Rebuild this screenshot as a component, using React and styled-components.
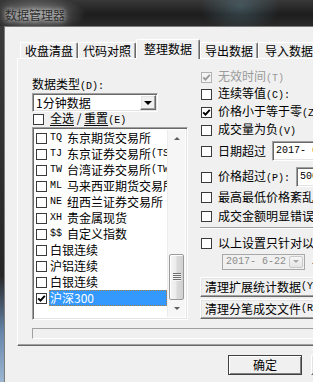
import React from "react"
import styled, { createGlobalStyle, css } from "styled-components"

const items = [
  { code: "TQ", name: "东京期货交易所" },
  { code: "TJ", name: "东京证券交易所", tail: "(TSE)" },
  { code: "TW", name: "台湾证券交易所", tail: "(TWSE)" },
  { code: "ML", name: "马来西亚期货交易所" },
  { code: "NE", name: "纽西兰证券交易所" },
  { code: "XH", name: "贵金属现货" },
  { code: "$$", name: "自定义指数" },
  { name: "白银连续" },
  { name: "沪铝连续" },
  { name: "白银连续" },
  { name: "沪深300", checked: true, selected: true },
]

const tabs = [
  { label: "收盘清盘", w: 58 },
  { label: "代码对照", w: 58 },
  { label: "整理数据", w: 64, active: true },
  { label: "导出数据", w: 58 },
  { label: "导入数据", w: 62 },
]

const Checkbox = ({ checked, disabled }) => (
  <Box $disabled={disabled}>
    {checked && (
      <svg width="9" height="9" viewBox="0 0 9 9">
        <path d="M1.2 4.3 L3.5 6.7 L7.8 1.8" fill="none" stroke="currentColor" strokeWidth="1.9" />
      </svg>
    )}
  </Box>
)

const App = () => {
  return (
    <>
      <GlobalStyle />
      <Screen>
        <TitleBar>
          <Title>数据管理器</Title>
        </TitleBar>
        <Body>
          <FrameEdge />
          <Client>
            <TabStrip>
              {tabs.map(t => (
                <Tab key={t.label} $w={t.w} $active={t.active}>
                  {t.label}
                </Tab>
              ))}
            </TabStrip>
            <Panel>
              <LeftColumn>
                <FieldLabel>
                  数据类型<Hint>(D):</Hint>
                </FieldLabel>
                <Combo>
                  <span>1分钟数据</span>
                  <DropButton>
                    <Arrow />
                  </DropButton>
                </Combo>
                <SelectAll>
                  <Checkbox />
                  <span>
                    <u>全选</u> / <u>重置</u>
                    <Hint>(E)</Hint>
                  </span>
                </SelectAll>
                <ListBox>
                  <Rows>
                    {items.map((it, i) => (
                      <ListRow key={i}>
                        <Checkbox checked={it.checked} />
                        <ItemText $selected={it.selected}>
                          {it.code && <Code>{it.code}</Code>}
                          {it.name}
                          {it.tail && <Hint>{it.tail}</Hint>}
                        </ItemText>
                      </ListRow>
                    ))}
                  </Rows>
                  <ScrollBar>
                    <ScrollArrow>
                      <SmallArrow $up />
                    </ScrollArrow>
                    <Track>
                      <Thumb>
                        <Grip />
                      </Thumb>
                    </Track>
                    <ScrollArrow>
                      <SmallArrow />
                    </ScrollArrow>
                  </ScrollBar>
                </ListBox>
              </LeftColumn>

              <RightColumn>
                <OptRow $h={17} $disabled>
                  <Checkbox checked disabled />
                  <span>
                    无效时间<Hint>(T)</Hint>
                  </span>
                </OptRow>
                <OptRow $h={17}>
                  <Checkbox />
                  <span>
                    连续等值<Hint>(C):</Hint>
                  </span>
                </OptRow>
                <OptRow $h={18}>
                  <Checkbox checked />
                  <span>
                    价格小于等于零<Hint>(Z)</Hint>
                  </span>
                </OptRow>
                <OptRow $h={19}>
                  <Checkbox />
                  <span>
                    成交量为负<Hint>(V)</Hint>
                  </span>
                </OptRow>
                <OptRow $h={22}>
                  <Checkbox />
                  <span>日期超过</span>
                  <TextField $w={80}>2017- 6-22</TextField>
                </OptRow>
                <OptRow $h={22} $mt={4}>
                  <Checkbox />
                  <span>
                    价格超过<Hint>(P):</Hint>
                  </span>
                  <TextField $w={60}>500</TextField>
                </OptRow>
                <OptRow $h={18}>
                  <Checkbox />
                  <span>最高最低价格紊乱</span>
                </OptRow>
                <OptRow $h={20}>
                  <Checkbox />
                  <span>成交金额明显错误</span>
                </OptRow>
                <Separator />
                <OptRow $h={16} $mt={6}>
                  <Checkbox />
                  <span>以上设置只针对以下日期</span>
                </OptRow>
                <DateRow>
                  <DatePicker>
                    <span>2017- 6-22</span>
                    <PickerButton>
                      <SmallArrow />
                    </PickerButton>
                  </DatePicker>
                  <span>-</span>
                </DateRow>
                <ActionButton $mt={7}>
                  清理扩展统计数据<Hint>(Y)</Hint>
                </ActionButton>
                <ActionButton $mt={2}>
                  清理分笔成交文件<Hint>(R)</Hint>
                </ActionButton>
              </RightColumn>

              <Progress />
            </Panel>
            <Footer>
              <DialogButton $default>确定</DialogButton>
              <DialogButton>取消</DialogButton>
            </Footer>
          </Client>
        </Body>
      </Screen>
    </>
  )
}

const GlobalStyle = createGlobalStyle`
  html, body {
    margin: 0;
    padding: 0;
    overflow: hidden;
    background: #222;
  }
  body {
    font-family: "Noto Sans CJK SC", "Noto Sans", sans-serif;
    font-size: 12px;
    color: #000;
  }
`

const sunken = css`
  border: 1px solid;
  border-color: #a0a0a0 #ffffff #ffffff #a0a0a0;
  box-shadow: inset 1px 1px 0 #696969, inset -1px -1px 0 #e3e3e3;
`

const raised = css`
  border: 1px solid;
  border-color: #ffffff #696969 #696969 #ffffff;
  box-shadow: inset -1px -1px 0 #a0a0a0, inset 1px 1px 0 #e3e3e3;
  background: #f0f0f0;
`

const Screen = styled.div`
  width: 313px;
  height: 382px;
  overflow: hidden;
  display: flex;
  flex-direction: column;
`

const TitleBar = styled.div`
  height: 26px;
  flex: none;
  display: flex;
  align-items: center;
  padding: 2px 0 0 5px;
  box-sizing: border-box;
  background:
    radial-gradient(ellipse 50px 18px at 36px 14px, rgba(200, 200, 200, 0.55), rgba(200, 200, 200, 0) 100%),
    radial-gradient(ellipse 40px 26px at 240px 6px, rgba(110, 160, 180, 0.35), rgba(110, 160, 180, 0) 100%),
    linear-gradient(to bottom, #383838, #1d1d1d 55%, #2a2a2a);
`

const Title = styled.span`
  font-size: 12px;
  color: #2e2e2e;
  text-shadow: 0 0 4px rgba(255, 255, 255, 0.8), 0 0 9px rgba(255, 255, 255, 0.5);
`

const Body = styled.div`
  flex: 1;
  display: flex;
  min-height: 0;
`

const FrameEdge = styled.div`
  width: 4px;
  flex: none;
  background: linear-gradient(to bottom, #3a3a3a 0%, #262626 70%, #6686aa 86%, #9cb6d2 100%);
`

const Client = styled.div`
  flex: none;
  width: 420px;
  background: #f0f0f0;
  border-left: 1px solid #7c7c7c;
  border-top: 1px solid #7c7c7c;
  padding: 12px 0 0 12px;
  box-sizing: border-box;
`

const TabStrip = styled.div`
  display: flex;
  align-items: flex-end;
  height: 19px;
  padding-left: 3px;
`

const Tab = styled.div`
  box-sizing: border-box;
  width: ${p => p.$w}px;
  height: ${p => (p.$active ? 20 : 16)}px;
  margin-bottom: ${p => (p.$active ? -1 : 0)}px;
  padding-bottom: ${p => (p.$active ? 2 : 0)}px;
  border: 1px solid #fff;
  border-bottom: none;
  border-right-color: #696969;
  border-radius: 2px 2px 0 0;
  box-shadow: inset -1px 0 0 #a0a0a0;
  background: #f0f0f0;
  display: flex;
  align-items: center;
  justify-content: center;
  position: relative;
  z-index: ${p => (p.$active ? 1 : 0)};
  line-height: 14px;
`

const Panel = styled.div`
  width: 400px;
  height: 288px;
  box-sizing: border-box;
  border: 1px solid;
  border-color: #fff #696969 #696969 #fff;
  box-shadow: inset -1px -1px 0 #a0a0a0;
  padding: 10px 0 0 14px;
  display: grid;
  grid-template-columns: 156px 220px;
  grid-template-rows: auto auto;
  column-gap: 12px;
  align-items: start;
`

const Hint = styled.span`
  font-family: "Liberation Mono", "DejaVu Sans Mono", monospace;
  font-size: 10px;
`

const LeftColumn = styled.div`
  margin-top: 8px;
  display: flex;
  flex-direction: column;
`

const FieldLabel = styled.div`
  line-height: 14px;
  height: 14px;
  margin-bottom: 2px;
`

const Combo = styled.div`
  ${sunken};
  box-sizing: border-box;
  width: 126px;
  height: 19px;
  background: #fff;
  display: flex;
  align-items: center;
  padding: 0 1px 0 3px;
  line-height: 14px;
`

const DropButton = styled.span`
  ${raised};
  box-sizing: border-box;
  margin-left: auto;
  width: 16px;
  height: 15px;
  display: flex;
  align-items: center;
  justify-content: center;
`

const Arrow = styled.span`
  width: 0;
  height: 0;
  border-left: 4px solid transparent;
  border-right: 4px solid transparent;
  border-top: 4px solid #000;
`

const SmallArrow = styled.span`
  width: 0;
  height: 0;
  border-left: 3.5px solid transparent;
  border-right: 3.5px solid transparent;
  ${p => (p.$up ? "border-bottom" : "border-top")}: 3px solid #5c5c5c;
`

const SelectAll = styled.div`
  height: 14px;
  display: flex;
  align-items: center;
  gap: 6px;
  padding-left: 1px;
  line-height: 14px;
  white-space: nowrap;
  u {
    text-underline-offset: 2px;
  }
`

const Box = styled.span`
  box-sizing: border-box;
  flex: none;
  width: 11px;
  height: 11px;
  border: 1px solid ${p => (p.$disabled ? "#b1b1b1" : "#3a3a3a")};
  background: ${p => (p.$disabled ? "#f4f4f4" : "#fff")};
  color: ${p => (p.$disabled ? "#9a9a9a" : "#000")};
  display: inline-flex;
  align-items: center;
  justify-content: center;
`

const ListBox = styled.div`
  ${sunken};
  box-sizing: border-box;
  margin-top: 1px;
  width: 156px;
  height: 193px;
  background: #fff;
  display: flex;
  padding: 2px;
`

const Rows = styled.div`
  flex: 1;
  min-width: 0;
  overflow: hidden;
`

const ListRow = styled.div`
  height: 16px;
  display: flex;
  align-items: stretch;
  padding-left: 1px;
  white-space: nowrap;
  > span:first-child {
    align-self: center;
    margin-right: 2px;
  }
`

const ItemText = styled.span`
  flex: 1;
  min-width: 0;
  overflow: hidden;
  display: flex;
  align-items: center;
  padding-left: 1px;
  line-height: 14px;
  background: ${p => (p.$selected ? "#3399ff" : "transparent")};
  color: ${p => (p.$selected ? "#fff" : "#000")};
  outline: ${p => (p.$selected ? "1px dotted #b07a40" : "none")};
  outline-offset: -1px;
`

const Code = styled(Hint)`
  width: 12px;
  margin-right: 5px;
  flex: none;
`

const ScrollBar = styled.div`
  width: 17px;
  flex: none;
  display: flex;
  flex-direction: column;
  background: #f6f6f6;
  border-left: 1px solid #ececec;
`

const ScrollArrow = styled.div`
  height: 17px;
  flex: none;
  display: flex;
  align-items: center;
  justify-content: center;
`

const Track = styled.div`
  flex: 1;
  display: flex;
  flex-direction: column;
  justify-content: flex-end;
  padding: 0 1px;
`

const Thumb = styled.div`
  height: 46px;
  box-sizing: border-box;
  border: 1px solid #9a9a9a;
  border-radius: 2px;
  background: linear-gradient(to right, #f6f6f6, #ebebeb 45%, #dadada 55%, #d2d2d2);
  box-shadow: inset 1px 1px 0 #fff;
  display: flex;
  align-items: center;
  justify-content: center;
`

const Grip = styled.span`
  width: 8px;
  height: 8px;
  background: repeating-linear-gradient(to bottom, #6e6e6e 0 1px, #f4f4f4 1px 2px);
`

const RightColumn = styled.div`
  display: flex;
  flex-direction: column;
  align-items: flex-start;
`

const OptRow = styled.div`
  height: ${p => p.$h}px;
  margin-top: ${p => p.$mt || 0}px;
  display: flex;
  align-items: center;
  gap: 6px;
  padding-left: 1px;
  line-height: 14px;
  white-space: nowrap;
  color: ${p => (p.$disabled ? "#9a9a9a" : "#000")};
`

const TextField = styled.span`
  ${sunken};
  box-sizing: border-box;
  width: ${p => p.$w}px;
  height: 20px;
  background: #fff;
  display: flex;
  align-items: center;
  padding-left: 3px;
  font-family: "Liberation Mono", "DejaVu Sans Mono", monospace;
  font-size: 10px;
`

const Separator = styled.div`
  align-self: stretch;
  margin-top: 1px;
  height: 1px;
  border-top: 1px solid #a0a0a0;
  border-bottom: 1px solid #fff;
  height: 0;
`

const DateRow = styled.div`
  margin: 2px 0 0 22px;
  display: flex;
  align-items: center;
  gap: 7px;
  white-space: nowrap;
`

const DatePicker = styled.div`
  box-sizing: border-box;
  width: 83px;
  height: 16px;
  border: 1px solid #a8a8a8;
  background: #f0f0f0;
  display: flex;
  align-items: center;
  padding: 0 1px 0 3px;
  color: #8c8c8c;
  font-family: "Liberation Mono", "DejaVu Sans Mono", monospace;
  font-size: 10px;
`

const PickerButton = styled.span`
  margin-left: auto;
  box-sizing: border-box;
  width: 14px;
  height: 12px;
  border: 1px solid #c9c9c9;
  border-radius: 2px;
  background: linear-gradient(to bottom, #f6f6f6, #e4e4e4);
  display: flex;
  align-items: center;
  justify-content: center;
  span {
    border-top-color: #a8a8a8;
  }
`

const ActionButton = styled.div`
  ${raised};
  box-sizing: border-box;
  margin-top: ${p => p.$mt}px;
  width: 150px;
  height: 20px;
  display: flex;
  align-items: center;
  padding-left: 4px;
  line-height: 14px;
  white-space: nowrap;
`

const Progress = styled.div`
  grid-column: 1 / -1;
  margin-top: 2px;
  height: 11px;
  box-sizing: border-box;
  border: 1px solid;
  border-color: #a0a0a0 #fff #fff #a0a0a0;
`

const Footer = styled.div`
  display: flex;
  gap: 9px;
  margin-top: 9px;
  padding-left: 211px;
`

const DialogButton = styled.div`
  ${raised};
  box-sizing: border-box;
  width: 74px;
  height: 20px;
  display: flex;
  align-items: center;
  justify-content: center;
  line-height: 14px;
  ${p =>
    p.$default &&
    css`
      border-color: #404040;
      box-shadow: inset 1px 1px 0 #fff, inset -1px -1px 0 #808080;
    `}
`

export default App
